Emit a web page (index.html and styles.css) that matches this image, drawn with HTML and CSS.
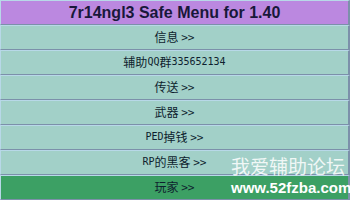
FILE: index.html
```html
<!DOCTYPE html>
<html>
<head>
<meta charset="utf-8">
<link rel="stylesheet" href="styles.css">
</head>
<body>
<div class="menu">
  <div class="row title">7r14ngl3 Safe Menu for 1.40</div>
  <div class="row item">信息 &gt;&gt;</div>
  <div class="row item">辅助<span class="lat">QQ</span>群<span class="lat">335652134</span></div>
  <div class="row item">传送 &gt;&gt;</div>
  <div class="row item">武器 &gt;&gt;</div>
  <div class="row item"><span class="lat">PED</span>掉钱 &gt;&gt;</div>
  <div class="row item"><span class="lat">RP</span>的黑客 &gt;&gt;</div>
  <div class="row item active">玩家 &gt;&gt;</div>
  <div class="watermark">
    <div class="wm-cn">我爱辅助论坛</div>
    <div class="wm-url">www.52fzba.com</div>
  </div>
</div>
</body>
</html>
```
FILE: styles.css
```css
html, body {
  margin: 0;
  padding: 0;
  background: #b8d8e8;
}
.menu {
  position: relative;
  width: 350px;
  height: 200px;
  display: flex;
  flex-direction: column;
  overflow: hidden;
}
.row {
  box-sizing: border-box;
  height: 25px;
  display: flex;
  align-items: center;
  justify-content: center;
  border-top: 1px solid #b8d8e8;
  border-left: 1px solid #b8d8e8;
  border-bottom: 1px solid #7c90aa;
  border-right: 2px solid #7c90aa;
}
.title {
  background: #bb88e0;
  color: #18183a;
  font-family: "Liberation Sans", Arial, sans-serif;
  font-weight: bold;
  font-size: 16px;
}
.item {
  background: #a2d0c8;
  color: #0e1e2e;
  font-family: "Noto Sans CJK SC", "DejaVu Sans", sans-serif;
  font-size: 12px;
  line-height: 14px;
  padding-bottom: 2px;
}
.lat {
  font-family: "DejaVu Sans Mono", monospace;
  font-size: 10px;
}
.item.active {
  background: #3ca064;
}
.watermark {
  position: absolute;
  left: 231px;
  top: 153px;
  color: #ffffff;
  display: flex;
  flex-direction: column;
  align-items: flex-start;
}
.wm-cn {
  font-family: "Noto Sans CJK SC", sans-serif;
  font-size: 19px;
  line-height: 26px;
  color: rgba(255,255,255,0.85);
}
.wm-url {
  font-family: "Liberation Sans", Arial, sans-serif;
  font-weight: bold;
  font-size: 15px;
  line-height: 17px;
}
```
